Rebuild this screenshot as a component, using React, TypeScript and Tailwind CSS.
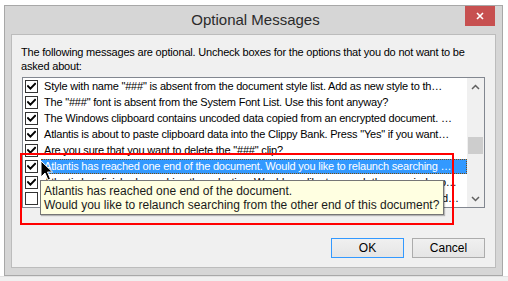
import { ReactNode } from "react"

const rows = [
  { checked: true, text: 'Style with name "###" is absent from the document style list. Add as new style to th…' },
  { checked: true, text: 'The "###" font is absent from the System Font List. Use this font anyway?' },
  { checked: true, text: "The Windows clipboard contains uncoded data copied from an encrypted document. …" },
  { checked: true, text: 'Atlantis is about to paste clipboard data into the Clippy Bank.  Press "Yes" if you want…' },
  { checked: true, text: 'Are you sure that you want to delete the "###" clip?' },
  { checked: true, text: "Atlantis has reached one end of the document. Would you like to relaunch searching …", selected: true },
  { checked: true, text: "Atlantis has finished searching the selection. Would you like to search the remainder of the document?" },
  { checked: false, text: "Atlantis has reached the end of the selection. Would you like to search the rest of the document for more?" },
]

function Checkbox({ checked }: { checked: boolean }) {
  return (
    <div className="w-[13px] h-[13px] shrink-0 border border-[#333333] bg-white flex items-center justify-center">
      {checked && (
        <svg width="9" height="9" viewBox="0 0 9 9">
          <path d="M1 4.2 L3.4 6.6 L8 1.8" stroke="#000" strokeWidth="2" fill="none" strokeLinecap="square" />
        </svg>
      )}
    </div>
  )
}

function Button({ children, primary }: { children: ReactNode; primary?: boolean }) {
  return (
    <button
      className={
        primary
          ? "w-[73px] h-[20px] border border-[#3399ff] bg-gradient-to-b from-[#f0f0f0] to-[#e5e5e5] text-[12px] text-black leading-none"
          : "w-[73px] h-[20px] border border-[#acacac] bg-gradient-to-b from-[#f0f0f0] to-[#e5e5e5] text-[12px] text-black leading-none"
      }
    >
      {children}
    </button>
  )
}

export default function App() {
  return (
    <div className="relative w-[508px] h-[281px] bg-white overflow-hidden flex flex-col font-['Liberation_Sans',Arial,sans-serif]">
      <div className="ml-[4px] mt-[5px] w-[499px] h-[271px] shrink-0 border border-[#a8a8a8] bg-[#d6d6d6] flex flex-col">
        {/* title bar */}
        <div className="relative h-[28px] shrink-0 flex items-center justify-center">
          <span className="text-[15px] text-[#2b2b2b] pl-[4px]">Optional Messages</span>
          <div className="absolute right-[7px] top-0 w-[30px] h-[20px] bg-[#c75050] flex items-center justify-center">
            <svg width="8" height="8" viewBox="0 0 8 8">
              <path d="M1 1 L7 7 M7 1 L1 7" stroke="#fff" strokeWidth="1.6" />
            </svg>
          </div>
        </div>

        {/* client area */}
        <div className="mx-[6px] mb-[7px] flex-1 border border-[#bcbcbc] bg-[#f0f0f0] pl-[10px] pr-[10px] pt-[10px] flex flex-col">
          <p className="ml-[-1px] text-[11px] tracking-[-0.2px] leading-[14px] text-black">
            The following messages are optional. Uncheck boxes for the options that you do not want to be asked about:
          </p>

          <div className="mt-[4px] h-[131px] border border-[#828790] bg-white flex">
            <div className="flex-1 min-w-0 pl-[2px] flex flex-col">
              {rows.map((r, i) => (
                <div key={i} className="h-[16px] shrink-0 flex items-center">
                  <Checkbox checked={r.checked} />
                  <div
                    className={
                      r.selected
                        ? "ml-[3px] flex-1 min-w-0 h-[15px] pl-[2px] pr-[2px] bg-[#3399ff] text-white border border-dotted border-[#7a4a10] text-[11px] tracking-[-0.2px] leading-[13px] truncate"
                        : "ml-[3px] flex-1 min-w-0 h-[15px] pl-[3px] pr-[8px] text-black text-[11px] tracking-[-0.2px] leading-[15px] truncate"
                    }
                  >
                    {r.text}
                  </div>
                </div>
              ))}
            </div>
            {/* scrollbar */}
            <div className="w-[17px] shrink-0 bg-[#f0f0f0] flex flex-col items-center">
              <div className="h-[17px] w-full flex items-center justify-center">
                <svg width="9" height="6" viewBox="0 0 9 6">
                  <path d="M1 5 L4.5 1.5 L8 5" stroke="#606060" strokeWidth="1.5" fill="none" />
                </svg>
              </div>
              <div className="mt-[42px] h-[17px] w-[15px] bg-[#cdcdcd]" />
              <div className="flex-1" />
              <div className="h-[17px] w-full flex items-center justify-center">
                <svg width="9" height="6" viewBox="0 0 9 6">
                  <path d="M1 1 L4.5 4.5 L8 1" stroke="#606060" strokeWidth="1.5" fill="none" />
                </svg>
              </div>
            </div>
          </div>

          <div className="mt-[30px] flex justify-end gap-[8px]">
            <Button primary>OK</Button>
            <Button>Cancel</Button>
          </div>
        </div>
      </div>
      <div className="flex-1 border-t border-[#e2e2e2] bg-[#f0f0f0]" />

      {/* red highlight box */}
      <div className="absolute left-[20px] top-[153px] w-[434px] h-[72px] border-2 border-[#ff0000]" />

      {/* tooltip */}
      <div className="absolute left-[40px] top-[180px] w-[404px] h-[35px] border border-[#767676] bg-[#ffffe1] px-[3px] pt-[3px] text-[12px] leading-[14px] text-[#1a1a1a] shadow-[1px_1px_1px_rgba(0,0,0,0.25)]">
        <div>Atlantis has reached one end of the document.</div>
        <div>Would you like to relaunch searching from the other end of this document?</div>
      </div>

      {/* mouse pointer */}
      <svg className="absolute left-[40px] top-[160px]" width="14" height="22" viewBox="0 0 14 22">
        <path d="M1 1 L1 17 L5 13 L8 20 L10.5 19 L7.5 12 L12.5 12 Z" fill="#000" stroke="#fff" strokeWidth="1" />
      </svg>
    </div>
  )
}
